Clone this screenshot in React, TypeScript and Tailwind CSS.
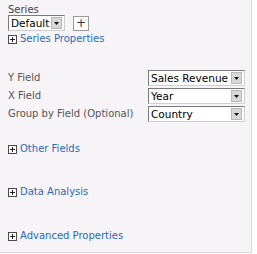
import React from 'react';

function Expander() {
  return (
    <svg width="9" height="9" viewBox="0 0 9 9" className="shrink-0">
      <rect x="0.5" y="0.5" width="8" height="8" fill="#fff" stroke="#4a4a4a" />
      <rect x="2" y="4" width="5" height="1" fill="#222" />
      <rect x="4" y="2" width="1" height="5" fill="#222" />
    </svg>
  );
}

function Arrow() {
  return (
    <span className="flex h-[12px] w-[11px] shrink-0 items-center justify-center border border-[#b9b9b9] bg-[#d8d8d8]">
      <svg width="5" height="3" viewBox="0 0 5 3">
        <path d="M0 0h5L2.5 3z" fill="#111" />
      </svg>
    </span>
  );
}

function Select({ value, w }: { value: string; w: string }) {
  return (
    <div className={`flex h-[16px] items-center justify-between border border-[#7a7a7a] border-r-[#cfcfcf] border-b-[#cfcfcf] bg-white pl-[2px] pr-[2px] ${w}`}>
      <span className="whitespace-nowrap text-[10.5px] leading-none text-black">{value}</span>
      <Arrow />
    </div>
  );
}

function Link({ label }: { label: string }) {
  return (
    <div className="flex items-center gap-[3px]">
      <Expander />
      <span className="text-[10px] leading-none text-[#2a6ab5]">{label}</span>
    </div>
  );
}

export default function App() {
  return (
    <div className="h-[254px] w-[257px] bg-white" style={{ fontFamily: '"DejaVu Sans", Verdana, sans-serif' }}>
      <div className="flex h-[253px] w-[252px] flex-col border-r border-b border-[#dcd8dc] bg-[#f7f4f7] pl-[8px] pt-[4px]">
        <div className="text-[10px] leading-[11px] text-[#444]">Series</div>
        <div className="flex items-center gap-[8px]">
          <Select value="Default" w="w-[57px]" />
          <span className="flex h-[15px] w-[16px] items-center justify-center border border-[#9a9a9a] bg-white text-[12px] leading-none text-[#333]">+</span>
        </div>
        <div className="mt-[3px]">
          <Link label="Series Properties" />
        </div>
        <div className="mt-[26px] flex flex-col gap-[2px] pr-[6px]">
          {[
            ['Y Field', 'Sales Revenue'],
            ['X Field', 'Year'],
            ['Group by Field (Optional)', 'Country'],
          ].map(([l, v]) => (
            <div key={l} className="flex items-center justify-between">
              <span className="text-[10px] leading-none text-[#555]">{l}</span>
              <Select value={v} w="w-[97px]" />
            </div>
          ))}
        </div>
        <div className="mt-[22px]">
          <Link label="Other Fields" />
        </div>
        <div className="mt-[33px]">
          <Link label="Data Analysis" />
        </div>
        <div className="mt-[34px]">
          <Link label="Advanced Properties" />
        </div>
      </div>
    </div>
  );
}
